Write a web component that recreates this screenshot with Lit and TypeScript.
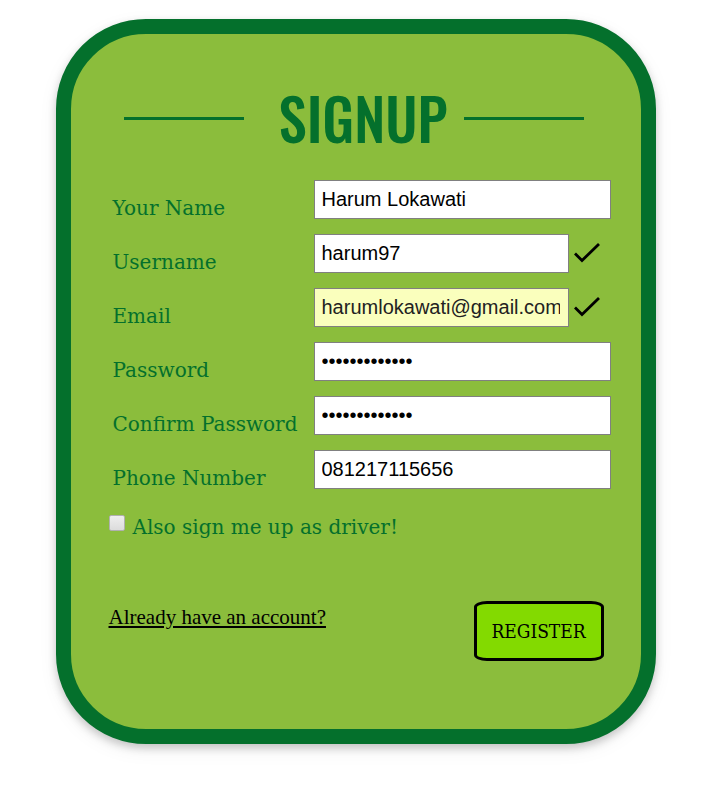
import { LitElement, html, css, nothing } from "lit";
import { customElement, property } from "lit/decorators.js";

interface Field {
  id: string;
  label: string;
  type: string;
  value: string;
  valid?: boolean;
  autofilled?: boolean;
}

const FIELDS: Field[] = [
  { id: "name", label: "Your Name", type: "text", value: "Harum Lokawati" },
  { id: "username", label: "Username", type: "text", value: "harum97", valid: true },
  { id: "email", label: "Email", type: "email", value: "harumlokawati@gmail.com", valid: true, autofilled: true },
  { id: "password", label: "Password", type: "password", value: "harumlokawati" },
  { id: "confirm", label: "Confirm Password", type: "password", value: "harumlokawati" },
  { id: "phone", label: "Phone Number", type: "tel", value: "081217115656" },
];

@customElement("signup-field")
class SignupField extends LitElement {
  @property({ attribute: false }) field!: Field;

  static styles = css`
    :host {
      display: grid;
      grid-template-columns: 201px minmax(0, 1fr);
      font-family: Rockwell, "DejaVu Serif", serif;
    }
    .label {
      align-self: end;
      font-size: 20px;
      line-height: 22px;
      color: #04702c;
      white-space: nowrap;
    }
    .control {
      display: flex;
      align-items: center;
      gap: 4px;
    }
    .input {
      box-sizing: border-box;
      flex: 1;
      min-width: 0;
      height: 39px;
      margin: 0;
      padding: 0 8px 0 7px;
      border: 1px solid #808080;
      border-radius: 0;
      background: #fff;
      color: #000;
      font-family: "Liberation Sans", Arial, sans-serif;
      font-size: 20px;
    }
    .autofilled {
      background: #faffbd;
      color: #222;
    }
    .check {
      flex: none;
      width: 38px;
      height: 27px;
    }
  `;

  render() {
    const f = this.field;
    return html`
      <label class="label" for=${f.id}>${f.label}</label>
      <div class="control">
        <input class="input ${f.autofilled ? "autofilled" : ""}" id=${f.id} type=${f.type} .value=${f.value} />
        ${f.valid
          ? html`<svg class="check" viewBox="0 0 38 27" role="img" aria-label="Valid">
              <path d="M2 13.5 L9 20.5 L26 4" fill="none" stroke="#000" stroke-width="2.8" />
            </svg>`
          : nothing}
      </div>
    `;
  }
}

@customElement("app-root")
class AppRoot extends LitElement {
  static styles = css`
    :host {
      display: block;
      padding: 19px 16px 55px;
      background: #fff;
      font-family: Rockwell, "DejaVu Serif", serif;
    }
    .card {
      box-sizing: border-box;
      max-width: 600px;
      margin: 0 auto;
      padding: 48px 30px 68px 38px;
      border: 15px solid #04702c;
      border-radius: 90px;
      background: #8bbd3c;
      box-shadow: 0 4px 8px rgba(0, 0, 0, 0.2), 0 6px 20px rgba(0, 0, 0, 0.06);
    }
    .header {
      display: flex;
      align-items: center;
      margin: 0 27px 26px 15px;
    }
    .rule {
      flex: none;
      width: 120px;
      height: 3px;
      background: #04702c;
    }
    .title {
      flex: 1;
      margin: 0;
      padding: 0 0 2px 19px;
      text-align: center;
      font-family: Oswald, "Liberation Sans Narrow", "Liberation Sans", sans-serif;
      font-size: 57px;
      font-weight: 500;
      line-height: 70px;
      color: #04702c;
    }
    .fields {
      display: grid;
      gap: 15px;
      padding-left: 4px;
    }
    .driver {
      display: flex;
      align-items: center;
      gap: 8px;
      margin-top: 26px;
      font-size: 20px;
      line-height: 24px;
      color: #04702c;
    }
    .box {
      appearance: none;
      align-self: start;
      width: 16px;
      height: 16px;
      margin: 0;
      border: 1px solid #b0b0b0;
      border-radius: 2px;
      background: linear-gradient(#eee, #dcdcdc);
    }
    .footer {
      display: flex;
      justify-content: space-between;
      margin: 62px 7px 0 0;
    }
    .login {
      margin-top: 4px;
      align-self: start;
      font-family: "Liberation Serif", "Times New Roman", serif;
      font-size: 21px;
      line-height: 24px;
      color: #000;
    }
    .register {
      width: 130px;
      height: 60px;
      padding: 0;
      border: 3px solid #000;
      border-radius: 10%;
      background: #83da00;
      color: #000;
      font-family: Rockwell, "DejaVu Serif Condensed", "DejaVu Serif", serif;
      font-size: 19px;
    }
  `;

  render() {
    return html`
      <form class="card" @submit=${(e: Event) => e.preventDefault()}>
        <div class="header">
          <span class="rule"></span>
          <h1 class="title">SIGNUP</h1>
          <span class="rule"></span>
        </div>
        <div class="fields">
          ${FIELDS.map((f) => html`<signup-field .field=${f}></signup-field>`)}
        </div>
        <label class="driver">
          <input class="box" type="checkbox" name="driver" />
          Also sign me up as driver!
        </label>
        <div class="footer">
          <a class="login" href="#login">Already have an account?</a>
          <button class="register" type="submit">REGISTER</button>
        </div>
      </form>
    `;
  }
}
